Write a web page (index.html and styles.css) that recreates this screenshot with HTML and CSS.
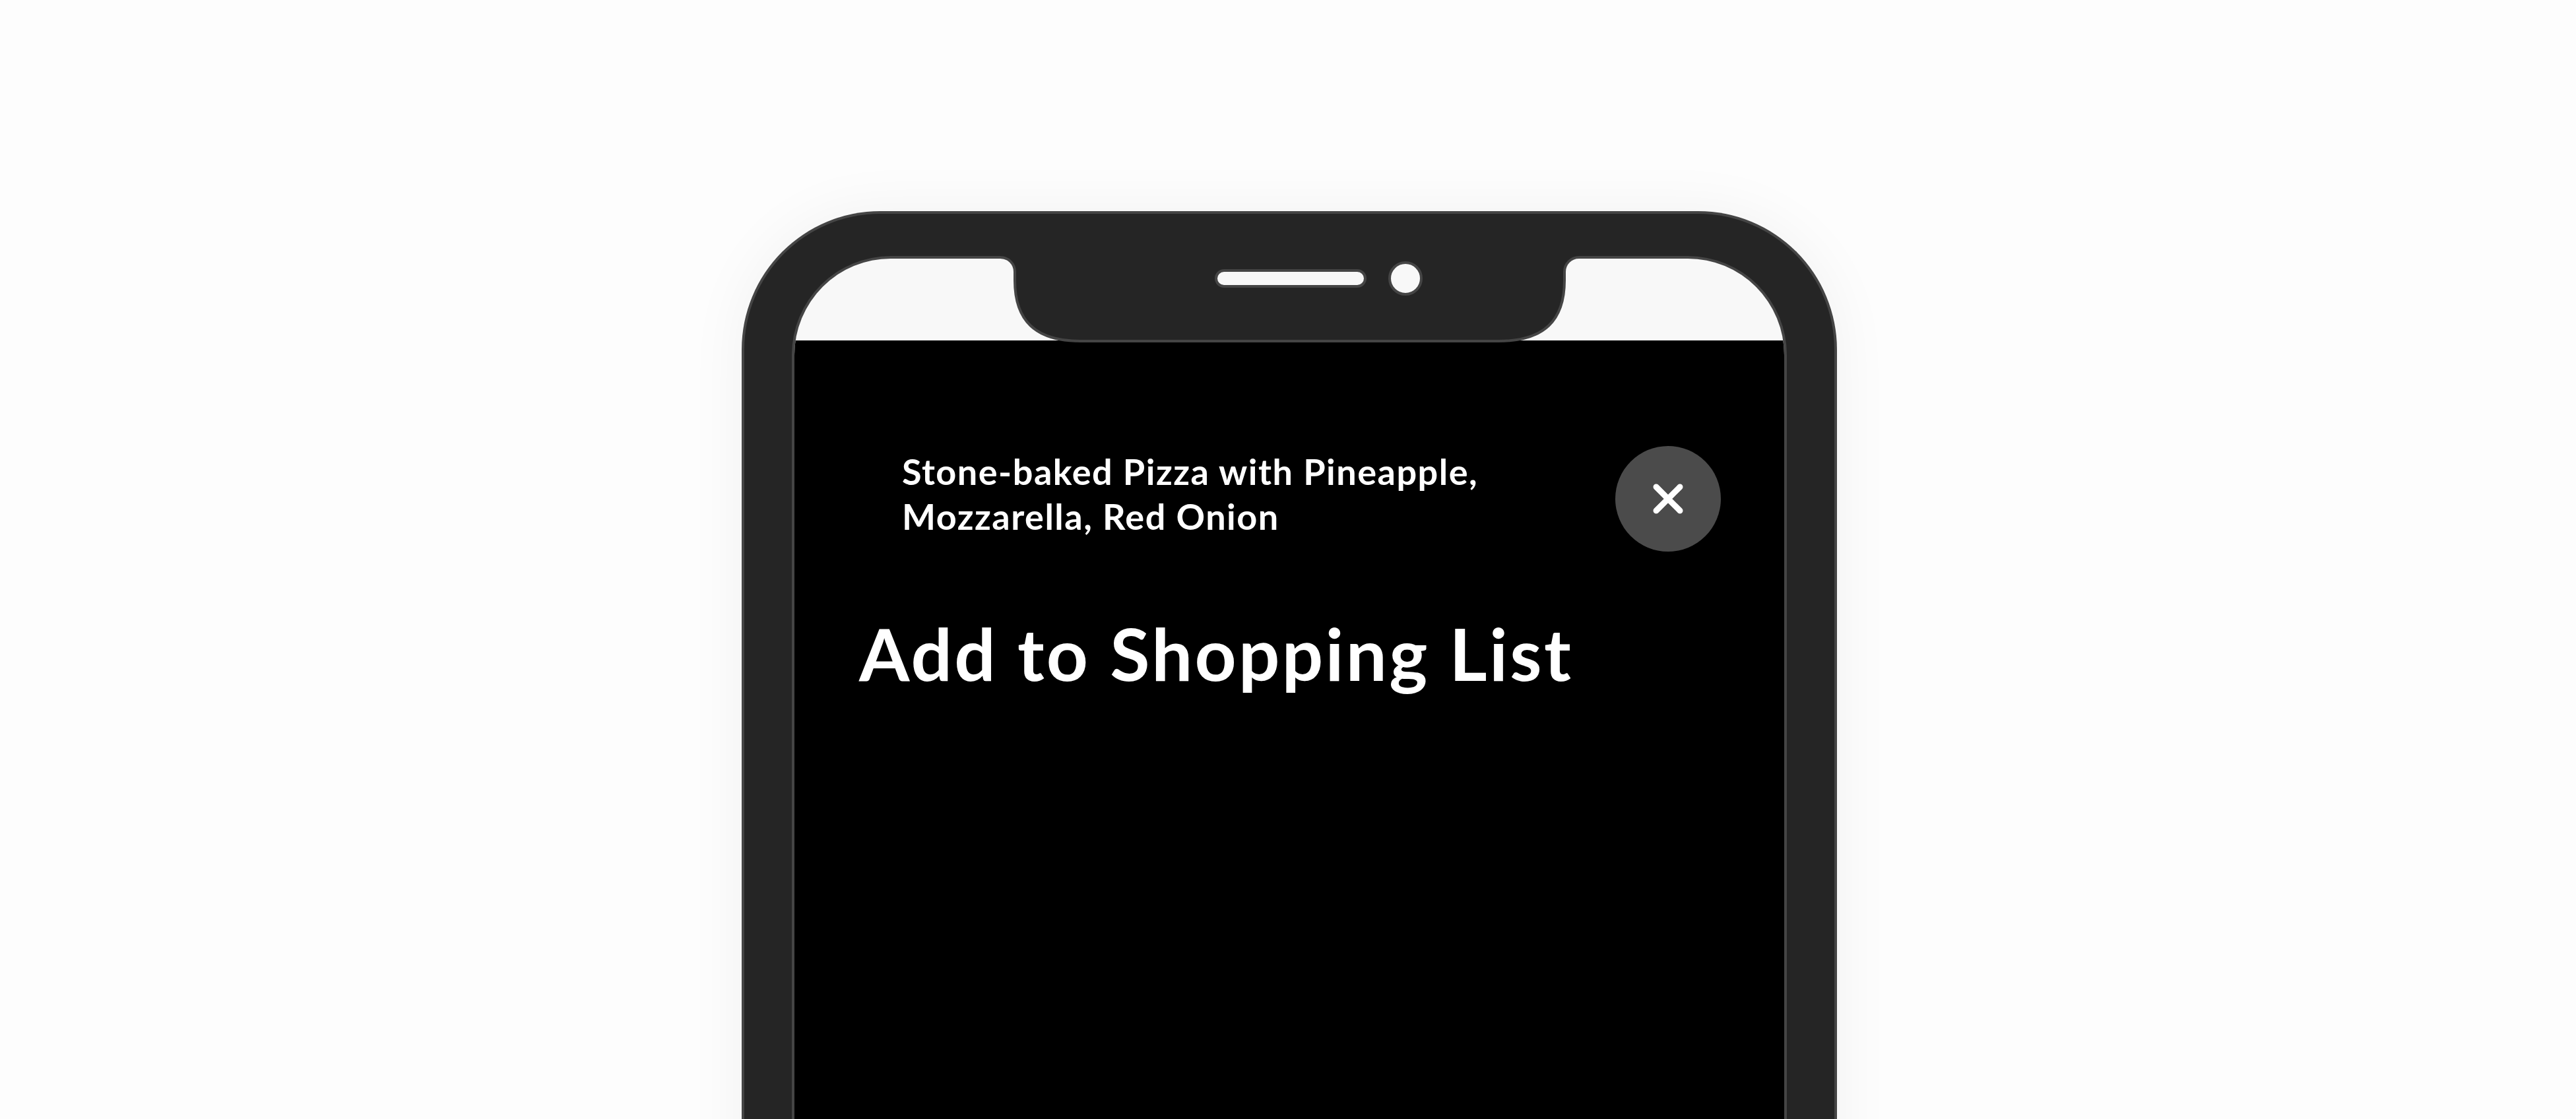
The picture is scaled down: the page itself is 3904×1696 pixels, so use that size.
FILE: index.html
```html
<!DOCTYPE html>
<html lang="en">
<head>
<meta charset="utf-8">
<title>Add to Shopping List</title>
<link rel="stylesheet" href="styles.css">
</head>
<body>
<div class="stage">
  <div class="phone">
    <svg class="notch" width="910" height="152" viewBox="0 0 910 152" aria-hidden="true">
      <path class="notch-fill" d="M0 0 H910 V20 H893 A22 22 0 0 0 871 42 V55 C871 115 841 147 771 147 H138 C68 147 38 115 38 55 V42 A22 22 0 0 0 16 20 H0 Z"/>
      <path class="notch-edge" d="M0 20 H16 A22 22 0 0 1 38 42 V55 C38 115 68 147 138 147 H771 C841 147 871 115 871 55 V42 A22 22 0 0 1 893 20 H910"/>
      <rect class="speaker" x="343" y="40" width="226" height="24" rx="12"/>
      <circle class="camera" cx="630" cy="52" r="24"/>
    </svg>
    <div class="screen">
      <div class="content">
        <div class="header">
          <p class="product">Stone-baked Pizza with Pineapple,<br>Mozzarella, Red Onion</p>
          <button class="close" type="button" aria-label="Close">
            <svg width="160" height="160" viewBox="0 0 160 160">
              <path d="M62 62 L98 98 M98 62 L62 98"/>
            </svg>
          </button>
        </div>
        <h1 class="title">Add to Shopping List</h1>
      </div>
    </div>
  </div>
</div>
</body>
</html>
```

FILE: styles.css
```css
html, body {
  margin: 0;
  padding: 0;
}

body {
  background: #fdfdfd;
  font-family: Lato, "Open Sans", sans-serif;
}

.stage {
  height: 1696px;
  overflow: hidden;
  display: flex;
  justify-content: center;
  padding-top: 320px;
  box-sizing: border-box;
}

.phone {
  position: relative;
  margin-left: 4px;
  width: 1660px;
  height: 1600px;
  flex: none;
  box-sizing: border-box;
  background: #252525;
  border: 4px solid #454545;
  border-bottom: none;
  border-radius: 210px 210px 0 0;
  padding: 64px 72px 0;
  box-shadow: 0 0 90px rgba(0, 0, 0, 0.05);
  display: flex;
  flex-direction: column;
}

.notch {
  position: absolute;
  left: 372px;
  top: 46px;
  z-index: 2;
}

.notch-fill {
  fill: #252525;
}

.notch-edge {
  fill: none;
  stroke: #454545;
  stroke-width: 4;
}

.speaker,
.camera {
  fill: #f8f8f8;
  stroke: #454545;
  stroke-width: 4;
}

.screen {
  flex: 1;
  box-sizing: border-box;
  border: 4px solid #454545;
  border-bottom: none;
  border-radius: 150px 150px 0 0;
  background: #f8f8f8;
  padding-top: 124px;
  overflow: hidden;
  display: flex;
  flex-direction: column;
}

.content {
  flex: 1;
  background: #000;
  padding: 160px 96px 0 98px;
  color: #fff;
}

.header {
  display: flex;
  justify-content: space-between;
  align-items: flex-start;
}

.product {
  margin: 5px 0 0;
  padding-left: 65px;
  font-size: 54px;
  line-height: 68px;
  font-weight: 700;
  letter-spacing: 1.5px;
}

.close {
  width: 160px;
  height: 160px;
  border: none;
  border-radius: 50%;
  background: #4b4b4b;
  padding: 0;
  flex: none;
  display: flex;
  align-items: center;
  justify-content: center;
}

.close svg {
  display: block;
}

.close path {
  stroke: #fff;
  stroke-width: 9;
  stroke-linecap: round;
  fill: none;
}

.title {
  margin: 87px 0 0;
  font-size: 110px;
  line-height: 132px;
  font-weight: 700;
  letter-spacing: 3.3px;
}
```
